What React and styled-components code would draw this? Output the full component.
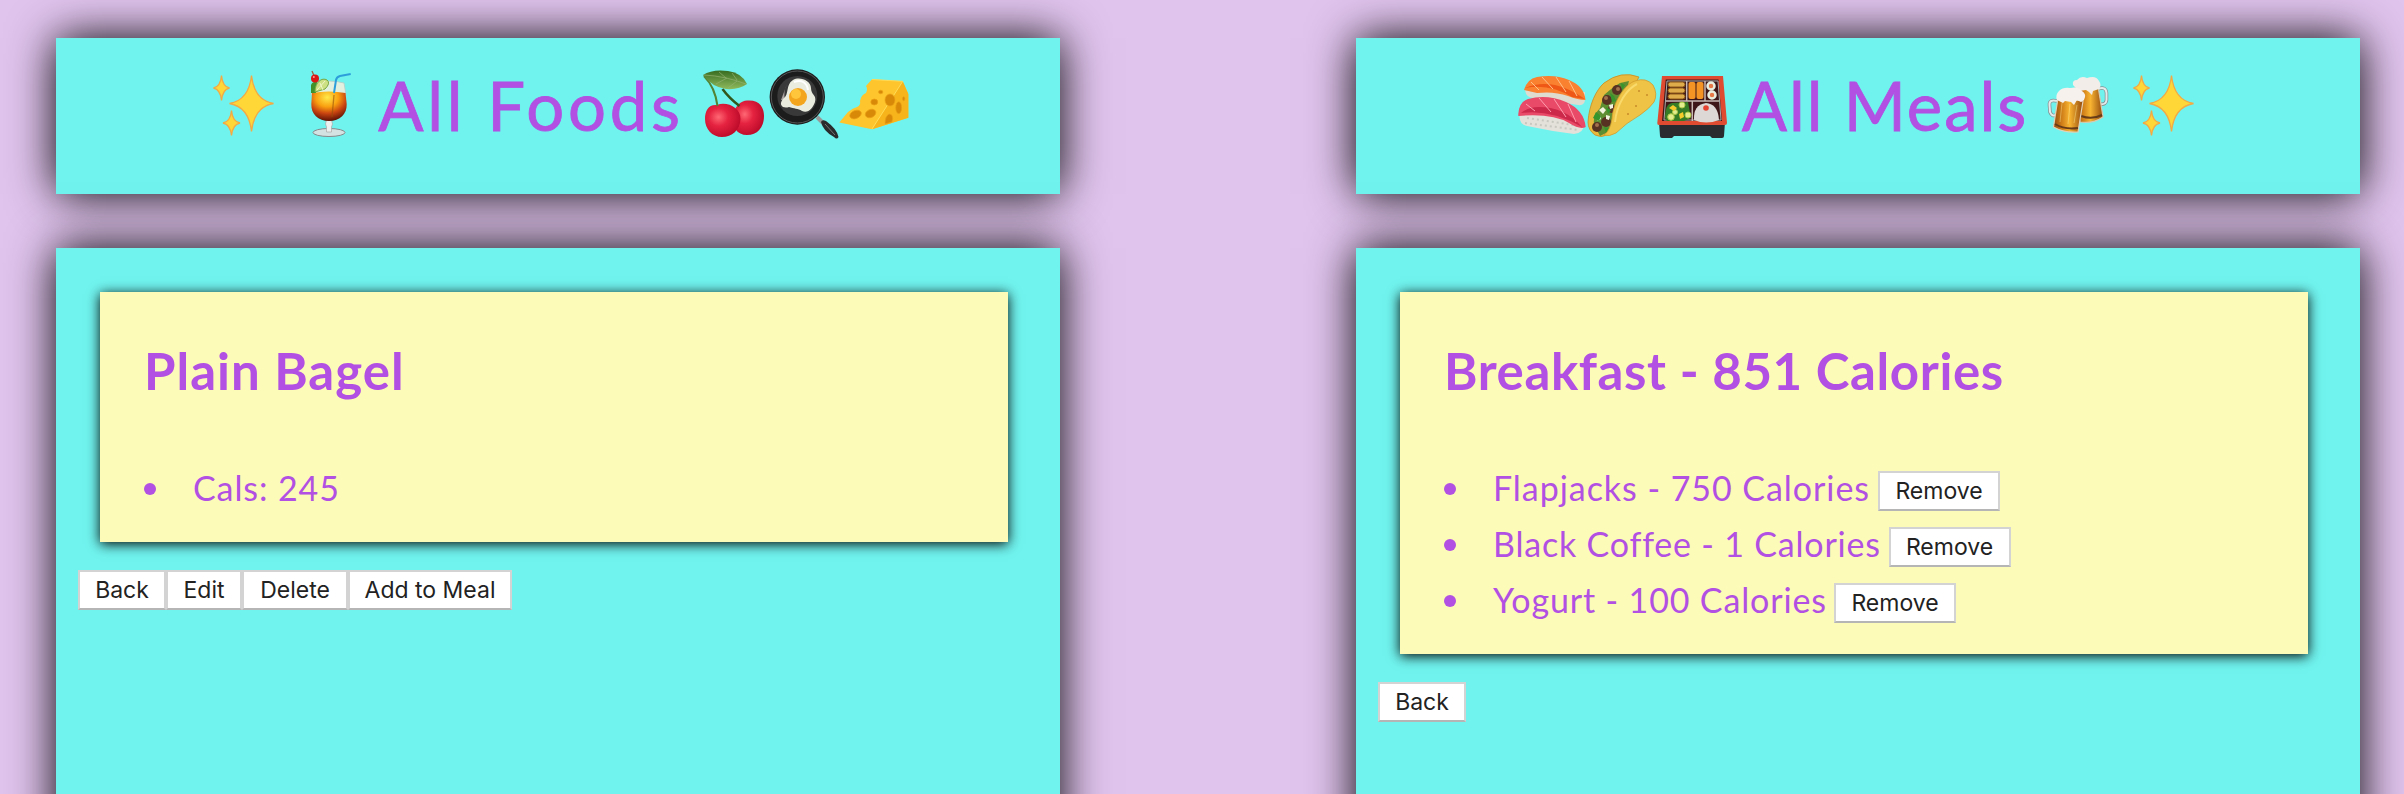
import React from 'react';
import styled, { createGlobalStyle } from 'styled-components';

const Global = createGlobalStyle`
  * { box-sizing: border-box; }
  html, body, #root { height: 100%; }
  body { margin: 0; background: #e1c4ee; overflow: hidden; }
`;

const Page = styled.main`
  height: 794px;
  overflow: hidden;
  display: flex;
  justify-content: space-between;
  padding: 38px 44px 0 56px;
  font-family: Papyrus, Lato, sans-serif;
  color: #b150e2;
`;
const Column = styled.section`
  width: 1004px;
  display: flex;
  flex-direction: column;
  gap: 54px;
`;
const Banner = styled.header`
  height: 156px;
  flex: none;
  padding-top: 28px;
  display: flex;
  justify-content: center;
  background: #70f3ee;
  box-shadow: 0 0 44px #000;
`;
const Title = styled.h1`
  width: ${(p) => p.$width}px;
  margin: -2px 0 0;
  text-align: center;
  white-space: nowrap;
  font-size: 67px;
  line-height: 82px;
  font-weight: 400;
  -webkit-text-stroke: 0.8px currentColor;
  letter-spacing: ${(p) => p.$track}px;
`;
const Emoji = styled.svg`
  width: 70px;
  height: 72px;
  flex: none;
  overflow: visible;
  margin-left: ${(p) => p.$before || 0}px;
`;
const Panel = styled.div`
  height: 620px;
  flex: none;
  padding: 44px 52px 0 44px;
  background: #70f3ee;
  box-shadow: 0 0 44px #000;
`;
const Card = styled.article`
  padding: 44px 44px 0;
  height: ${(p) => p.$height}px;
  background: #fdfbb8;
  box-shadow: 0 2px 12px #000;
`;
const CardTitle = styled.h2`
  margin: 0 0 54px;
  font-size: 51px;
  line-height: 70px;
  font-weight: 700;
  white-space: nowrap;
  letter-spacing: ${(p) => p.$track}px;
`;
const List = styled.ul`
  margin: 0;
  padding: 0;
  list-style: none;
`;
const Item = styled.li`
  height: 56px;
  display: flex;
  align-items: center;
  white-space: nowrap;
  font-size: 34px;
  line-height: 56px;
  &::before {
    content: '';
    width: 12px;
    height: 12px;
    margin: 2px 37px 0 0;
    border-radius: 50%;
    background: currentColor;
  }
  button {
    margin-top: 6px;
  }
`;
const ItemText = styled.span`
  width: ${(p) => (p.$width ? `${p.$width}px` : 'auto')};
  letter-spacing: ${(p) => p.$track}px;
`;
const Button = styled.button`
  width: ${(p) => p.$width}px;
  height: 40px;
  padding: 0;
  flex: none;
  border: 2px solid #d3d3d3;
  border-bottom-color: #b5b5b5;
  border-radius: 0;
  background: #fff;
  color: #222;
  font: 23px/34px Inter, sans-serif;
  text-align: center;
`;
const Actions = styled.div`
  display: flex;
  margin: 28px 0 0 -22px;
`;

const star = (x, y, w, h) =>
  `M${x} ${y - h}Q${x + w * 0.12} ${y - h * 0.12} ${x + w} ${y}Q${x + w * 0.12} ${y + h * 0.12} ${x} ${y + h}Q${x - w * 0.12} ${y + h * 0.12} ${x - w} ${y}Q${x - w * 0.12} ${y - h * 0.12} ${x} ${y - h}Z`;

const Sparkles = (p) => (
  <Emoji viewBox="0 0 70 72" {...p}>
    <g fill="#ffd838" stroke="#f3aa45" strokeWidth="1.3">
      <path d={star(42.5, 37.5, 22, 28)} />
      <path d={star(12.5, 22, 8, 12.5)} />
      <path d={star(22.500, 57, 8.5, 12.5)} />
    </g>
  </Emoji>
);

const Cocktail = (p) => (
  <Emoji viewBox="0 0 70 72" {...p}>
    <defs>
      <radialGradient id="drink" cx=".45" cy=".2" r=".8">
        <stop offset="0" stopColor="#ffe94a" />
        <stop offset=".4" stopColor="#f9a010" />
        <stop offset=".68" stopColor="#c94410" />
        <stop offset="1" stopColor="#5e1206" />
      </radialGradient>
    </defs>
    <ellipse cx="36" cy="66.5" rx="16" ry="4" fill="#d5e2e2" stroke="#87898b" />
    <path d="M33.500 54h5l1 4-1 3v5h-5v-5l-1-3Z" fill="#eef0f0" stroke="#a7a7a7" strokeWidth=".7" />
    <path d="M20 17Q36 13 51 17L53 29H18Z" fill="#e2f0df" stroke="#b6cbc6" strokeWidth=".8" />
    <path d="M19 27Q36 24 52.500 27L53.700 38C54 48 47 55 36 55S18 48 18.300 38Z" fill="url(#drink)" />
    <path d="M18 27V19Q20 15 24 16L23 27Z" fill="#40922a" />
    <path d="M22 26C22 16 29 11 34 14Q38 17 32 23Z" fill="#cde184" stroke="#78a840" />
    <path d="M24 24L32 15M27 17L30 24" stroke="#eff5c8" />
    <path d="M19 5L22 12" stroke="#996644" strokeWidth="1.300" />
    <circle cx="22" cy="12.500" r="4" fill="#dc1515" />
    <circle cx="20.800" cy="11" r="1" fill="#ff9c8c" />
    <path d="M41 27L43 14Q43.500 11 47 10L57.700 8" fill="none" stroke="#2e9edb" strokeWidth="2" />
    <path d="M41 29L39 51" stroke="#95510b" strokeWidth="1.300" opacity=".6" />
  </Emoji>
);

const Cherries = () => (
  <Emoji viewBox="0 0 70 72">
    <defs>
      <radialGradient id="cherry" cx=".38" cy=".4" r=".68">
        <stop offset="0" stopColor="#ff6875" />
        <stop offset=".4" stopColor="#e52340" />
        <stop offset="1" stopColor="#b90828" />
      </radialGradient>
      <linearGradient id="leaf" x2="0" y2="1">
        <stop stopColor="#386b21" />
        <stop offset="1" stopColor="#8fba5c" />
      </linearGradient>
    </defs>
    <path d="M49 34.500C61 34 65 42 65 50C65 62 58 69 48 69C38 69 33 61 34 50C35 41 42 34 49 34.500Z" fill="url(#cherry)" />
    <path d="M23.500 23Q30 32 40.500 40" fill="none" stroke="#31571c" strokeWidth="2.500" />
    <path d="M18 39C28 35 42 42 41.500 53C41 64 33 71 23 71C13 71 6 63 6 53C6 44 10 38 18 39Z" fill="url(#cherry)" />
    <path d="M5 10Q16 21 18.500 40" fill="none" stroke="#538335" strokeWidth="2" />
    <path d="M4 9Q13 3 29 5Q43 7 48 18Q40 24 27 23Q13 21 4 9Z" fill="url(#leaf)" />
    <path d="M5 9Q26 10 47 18M20 6L27 12M33 7L38 14M17 18L28 12M29 22L38 15" fill="none" stroke="#92b071" strokeWidth=".7" />
  </Emoji>
);

const Pan = () => (
  <Emoji viewBox="0 0 70 72">
    <path d="M48 51L55 58" stroke="#999" strokeWidth="4" />
    <path d="M52 56Q53 53 57 55Q68 63 69.500 71Q68 74 65 71Q54 65 52 56Z" fill="#292b2c" />
    <path d="M56 58L66 69" stroke="#777" />
    <circle cx="28.300" cy="31" r="27.700" fill="#1c1c1d" />
    <circle cx="28.300" cy="31" r="26" fill="none" stroke="#555" />
    <circle cx="28.300" cy="30" r="20" fill="#39393a" />
    <path d="M12 34L18 18Q14 26 16 34Z" fill="#a8a1a0" />
    <path d="M24 14C31 10 42 15 42 22C42 29 48 29 46 36C44 42 39 48 33 45C29 42 25 43 20 41C14 43 9 39 14 33C21 28 16 19 24 14Z" fill="#ebece0" />
    <path d="M25 16C33 13 38 17 39 24" fill="none" stroke="#fff" strokeWidth="2" />
    <circle cx="29" cy="31" r="9" fill="#f4a51e" />
    <circle cx="27" cy="28" r="5" fill="#ffc63c" />
  </Emoji>
);

const Cheese = () => (
  <Emoji viewBox="0 0 70 72">
    <path d="M.3 56.500L9 46Q14 42 18 41Q22 39 21 35Q22 29 27 27Q29 23 27 20L33 13.300L63.700 15.300L69.300 28V51.700L33 63.300Z" fill="#ffc52c" />
    <path d="M63.700 15.300L33 63.300L69.300 51.700V28Z" fill="#f8b51b" />
    <path d="M33 13.500L63.700 15.300L33 63" fill="none" stroke="#ffdc58" />
    <g fill="#d98908" stroke="#e9a015" strokeWidth=".7">
      <ellipse cx="16.300" cy="48.700" rx="6" ry="4" transform="rotate(-22 16 48)" />
      <ellipse cx="31.300" cy="47.700" rx="5.500" ry="4" transform="rotate(-25 31 47)" />
      <ellipse cx="35.300" cy="36" rx="3.500" ry="3" />
      <ellipse cx="41.700" cy="26" rx="2.200" ry="1.800" />
      <ellipse cx="51" cy="34" rx="5" ry="6" />
      <ellipse cx="59.700" cy="41.700" rx="3" ry="6" />
      <path d="M46 58Q46 50 50 48Q55 48 53 56Z" />
      <ellipse cx="64.700" cy="32.700" rx="1.200" ry="2" />
    </g>
  </Emoji>
);

const Sushi = () => (
  <Emoji viewBox="0 0 70 72">
    <path d="M8 24Q9 32 17 32L61 39Q68 40 68 33V26H18Z" fill="#dedbd1" />
    <path d="M7 24Q10 13 20 11Q38 8 52 14Q67 20 68.500 34Q61 34 51 30Q37 25 20 27Z" fill="#fa8130" />
    <path d="M8 22Q32 17 55 31L68 33Q52 22 38 19Q22 16 8 22Z" fill="#ee5716" />
    <path d="M14 16L22 24M25 11L36 23M39 11L49 26M52 15L60 30" fill="none" stroke="#ffc18a" strokeWidth="1" />
    <path d="M3 48Q1 58 10 60Q33 65 57 68Q67 67 67 58L33 46Z" fill="#e3e1d9" />
    <path d="M8 57L62 64M10 52L63 60" stroke="#c9c8c0" strokeWidth="2" strokeDasharray="2 3" />
    <path d="M1.300 48Q2 36 11 33Q30 28 49 36Q67 44 68.700 61Q63 64 52 57Q35 47 1.300 50Z" fill="#e84a67" />
    <path d="M4 47Q34 43 65 61Q48 41 22 41Q11 41 4 47Z" fill="#cc2849" />
    <path d="M9 38L18 45M22 32L34 46M37 33L49 51M51 38L59 56" fill="none" stroke="#ff9eaf" strokeWidth="1" />
  </Emoji>
);

const Taco = () => (
  <Emoji viewBox="0 0 70 72">
    <path d="M1 56C2 39 9 24 17 17Q34 4 52 11L28 55L20 69Q14 72 8 69Q1 64 1 56Z" fill="#e8b93c" stroke="#c98c22" strokeWidth=".8" />
    <path d="M8 60Q4 51 13 42L17 29Q26 21 33 17L42 15L39 27L23 65L13 70Z" fill="#5f8e32" />
    <g fill="#573223">
      <circle cx="20" cy="34" r="5" />
      <circle cx="30" cy="24" r="5" />
      <circle cx="10" cy="61" r="5" />
      <circle cx="19" cy="56" r="5" />
      <circle cx="25" cy="43" r="4" />
    </g>
    <g fill="#a1704d">
      <circle cx="19" cy="32" r="2" />
      <circle cx="31" cy="23" r="2" />
      <circle cx="10" cy="59" r="2" />
    </g>
    <g fill="#f1f3df">
      <path d="M12 44l4-3 3 3-3 4zM22 39l4-1v4l-3 1zM9 52l4-3 1 4-3 2zM19 49l4 1-1 4-3-1z" />
    </g>
    <path d="M23 27l4 3 2 5-4 1zM9 46l5 4-2 5-6-3zM19 41l5 3-3 4zM34 17l4 2-3 5zM17 61l5 1-3 5z" fill="#36952d" />
    <path d="M17 69Q23 65 25 53C26 36 38 18 48 15Q59 11 66 19Q71 28 67 36Q63 42 53 49Q39 57 29 67Q22 71 17 69Z" fill="#efc345" stroke="#d39a2c" strokeWidth=".8" />
    <path d="M28 56C30 37 40 23 50 18" fill="none" stroke="#f9da6b" strokeWidth="2" />
    <path d="M48 40h2M59 29h2M40 48h2M51 25h2" stroke="#c88c29" strokeWidth="1.500" />
  </Emoji>
);

const Bento = () => (
  <Emoji viewBox="0 0 70 72">
    <path d="M2 56H68L67 70Q67 72 65 72H55L53 70H17L15 72H5Q3 72 3 70Z" fill="#292b2e" />
    <path d="M5 10H66L70 57Q70 59 68 59H2Q0 59 .3 57Z" fill="#df4b30" />
    <path d="M8.700 13.500H61.500L65 55H5Z" fill="#3d1717" />
    <path d="M10 15H61L64 54H7Z" fill="none" stroke="#aaa" />
    <path d="M9 35H62M29.700 15V35M48 15V35M35.300 35V55" stroke="#c8b9b5" strokeWidth="1.500" />
    <g fill="#dfac4b" stroke="#8c5617">
      <rect x="11" y="16" width="17" height="5" rx="2.500" />
      <rect x="11" y="22" width="17" height="5" rx="2.500" />
      <rect x="11" y="28" width="17" height="5" rx="2.500" />
    </g>
    <rect x="31.500" y="16" width="7" height="17" rx="2" fill="#f39425" />
    <rect x="39.500" y="16" width="7" height="17" rx="2" fill="#f39425" />
    <g fill="#e57947" stroke="#e9efdf" strokeWidth="2.500">
      <circle cx="54" cy="20" r="3.500" />
      <circle cx="55" cy="29" r="3.500" />
    </g>
    <path d="M8 52Q8 38 15 37L31 36L34 52L27 55H10Z" fill="#367b26" />
    <g fill="#e4ed8e" stroke="#a9c745">
      <circle cx="14" cy="51" r="3.300" />
      <circle cx="25" cy="39" r="3" />
      <circle cx="31" cy="49" r="3" />
      <circle cx="18" cy="46" r="2.500" />
    </g>
    <path d="M12 42l4-3 4 3-3 3zM22 48l4-2 1 5-4 2z" fill="#f5ca2b" />
    <path d="M37 54Q36 39 49 37Q61 38 62 54Q49 59 37 54Z" fill="#ddd8d5" />
    <circle cx="49" cy="42" r="2.800" fill="#e44331" />
  </Emoji>
);

const Beers = () => (
  <Emoji viewBox="0 0 70 72">
    <defs>
      <linearGradient id="beer">
        <stop stopColor="#8f4a10" />
        <stop offset=".28" stopColor="#cf7d18" />
        <stop offset=".55" stopColor="#f8b431" />
        <stop offset="1" stopColor="#92490d" />
      </linearGradient>
    </defs>
    <path d="M55 23Q63 20 63.500 27V34Q63 39 57 38" fill="none" stroke="#879092" strokeWidth="3.500" />
    <path d="M55 23Q63 20 63.500 27V34Q63 39 57 38" fill="none" stroke="#e3ebeb" strokeWidth="2" />
    <path d="M32 22L55 20L60 51Q50 58 37 56Z" fill="url(#beer)" stroke="#d8c8ae" strokeWidth="1.200" />
    <path d="M38 50Q49 54 59 49" fill="none" stroke="#673b18" strokeWidth="2" />
    <path d="M30 19Q29 14 34 14Q38 9 44 12Q53 9 56 15Q59 19 56 23L50 25L49 29L46 26L43 24L36 25Z" fill="#f2ede9" />
    <path d="M14 35Q6 33 6.500 39L7 46Q9 51 13 49" fill="none" stroke="#879092" strokeWidth="3.500" />
    <path d="M14 35Q6 33 6.500 39L7 46Q9 51 13 49" fill="none" stroke="#e3ebeb" strokeWidth="2" />
    <path d="M15 32L40 35L35 66Q21 67 10.500 61Z" fill="url(#beer)" stroke="#e0d1b8" strokeWidth="1.200" />
    <path d="M12 58Q22 64 35 62" fill="none" stroke="#673b18" strokeWidth="2" />
    <path d="M19 37L17 56M27 38L25 58M34 39L31 57" stroke="#fff0a0" opacity=".4" />
    <path d="M14 34Q12 29 16 25Q20 21 27 22Q36 20 39 25Q44 28 41 34L38 36L34 34L31 39L28 36L22 35L20 37Z" fill="#f6f1ed" />
  </Emoji>
);

const meals = [
  { text: 'Flapjacks - 750 Calories', width: 385, track: 0.95 },
  { text: 'Black Coffee - 1 Calories', width: 395.5, track: 0.8 },
  { text: 'Yogurt - 100 Calories', width: 341, track: 0.85 },
];

export default function App() {
  return (
    <>
      <Global />
      <Page>
        <Column>
          <Banner>
            <Sparkles $before={2} />
            <Cocktail $before={14} />
            <Title $width={336} $track={3.8}>All Foods</Title>
            <Cherries />
            <Pan />
            <Cheese />
          </Banner>
          <Panel>
            <Card $height={250}>
              <CardTitle $track={1}>Plain Bagel</CardTitle>
              <List>
                <Item><ItemText $track={0.9}>Cals: 245</ItemText></Item>
              </List>
            </Card>
            <Actions>
              <Button $width={88}>Back</Button>
              <Button $width={76}>Edit</Button>
              <Button $width={106}>Delete</Button>
              <Button $width={164}>Add to Meal</Button>
            </Actions>
          </Panel>
        </Column>
        <Column>
          <Banner>
            <Sushi />
            <Taco />
            <Bento />
            <Title $width={316} $track={2}>All Meals</Title>
            <Beers />
            <Sparkles $before={16} />
          </Banner>
          <Panel>
            <Card $height={362}>
              <CardTitle $track={0.6}>Breakfast - 851 Calories</CardTitle>
              <List>
                {meals.map((m) => (
                  <Item key={m.text}>
                    <ItemText $width={m.width} $track={m.track}>{m.text}</ItemText>
                    <Button $width={122}>Remove</Button>
                  </Item>
                ))}
              </List>
            </Card>
            <Actions>
              <Button $width={88}>Back</Button>
            </Actions>
          </Panel>
        </Column>
      </Page>
    </>
  );
}
